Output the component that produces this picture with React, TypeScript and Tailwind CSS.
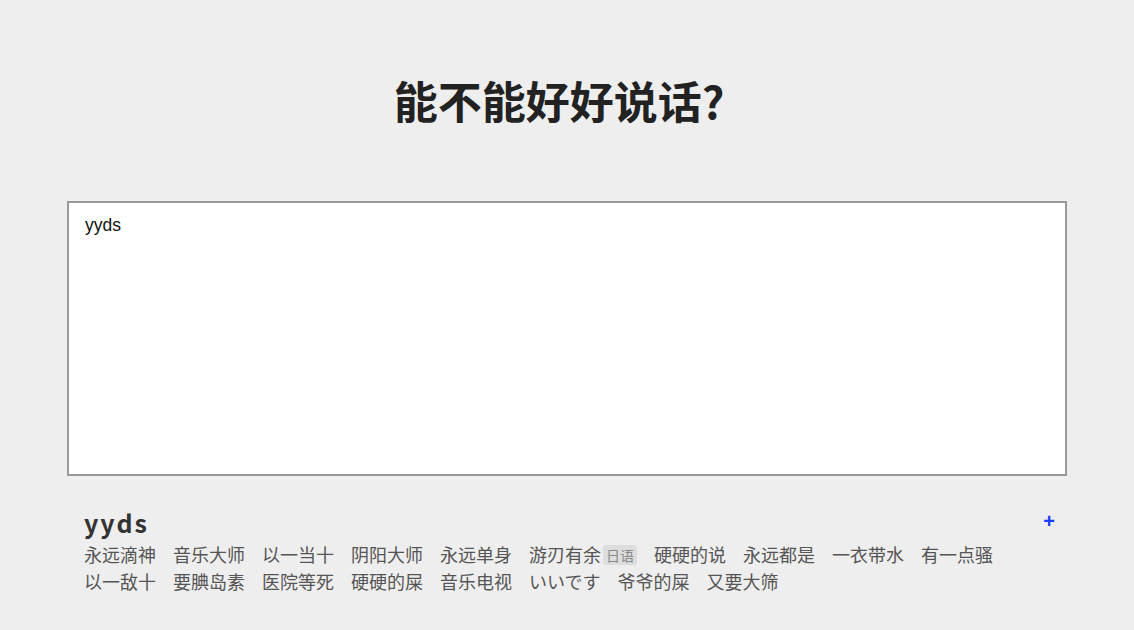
import { useState } from "react";

type Tag = { text: string; lang?: string };

const TAGS: Tag[] = [
  { text: "永远滴神" },
  { text: "音乐大师" },
  { text: "以一当十" },
  { text: "阴阳大师" },
  { text: "永远单身" },
  { text: "游刃有余", lang: "日语" },
  { text: "硬硬的说" },
  { text: "永远都是" },
  { text: "一衣带水" },
  { text: "有一点骚" },
  { text: "以一敌十" },
  { text: "要腆岛素" },
  { text: "医院等死" },
  { text: "硬硬的屎" },
  { text: "音乐电视" },
  { text: "いいです" },
  { text: "爷爷的屎" },
  { text: "又要大筛" },
];

const cjk = "font-['Noto_Sans_CJK_SC','Noto_Sans',sans-serif]";

export default function App() {
  const [text, setText] = useState("yyds");

  return (
    <div className={`min-h-screen bg-[#eeeeee] ${cjk}`}>
      <div className="w-[1000px] mx-auto pt-[68px]">
        {/* Header */}
        <h1 className="text-center text-[44px] font-bold leading-[64px] text-[#222] pr-[16px]">
          能不能好好说话?
        </h1>

        {/* Input */}
        <textarea
          value={text}
          onChange={(e) => setText(e.target.value)}
          className="block mt-[69px] w-full h-[275px] bg-white border-2 border-[#9a9a9a] pl-[16px] pr-[15px] py-[10px] text-[17.5px] leading-[24px] text-[#111] font-['Liberation_Sans',Arial,sans-serif] resize-none outline-none"
        />

        {/* Result */}
        <div className="px-[17px] pt-[27px]">
          <div className="flex justify-between items-start">
            <div className="text-[25px] leading-[38px] font-bold tracking-[2px] text-[#333]">
              {text}
            </div>
            <button className="text-[#1a3dff] text-[20px] font-bold leading-[24px] mt-[6px] mr-[-5px] font-['Liberation_Sans',sans-serif]">
              +
            </button>
          </div>
          <div className="flex flex-wrap w-[930px] text-[18px] leading-[27px] text-[#555]">
            {TAGS.map((t) => (
              <span key={t.text} className="mr-[17px] flex items-center">
                {t.text}
                {t.lang && (
                  <span className="ml-[2px] px-[3px] text-[14px] leading-[20px] text-[#888] bg-[#dddddd] rounded-[3px]">
                    {t.lang}
                  </span>
                )}
              </span>
            ))}
          </div>
        </div>
      </div>
    </div>
  );
}
